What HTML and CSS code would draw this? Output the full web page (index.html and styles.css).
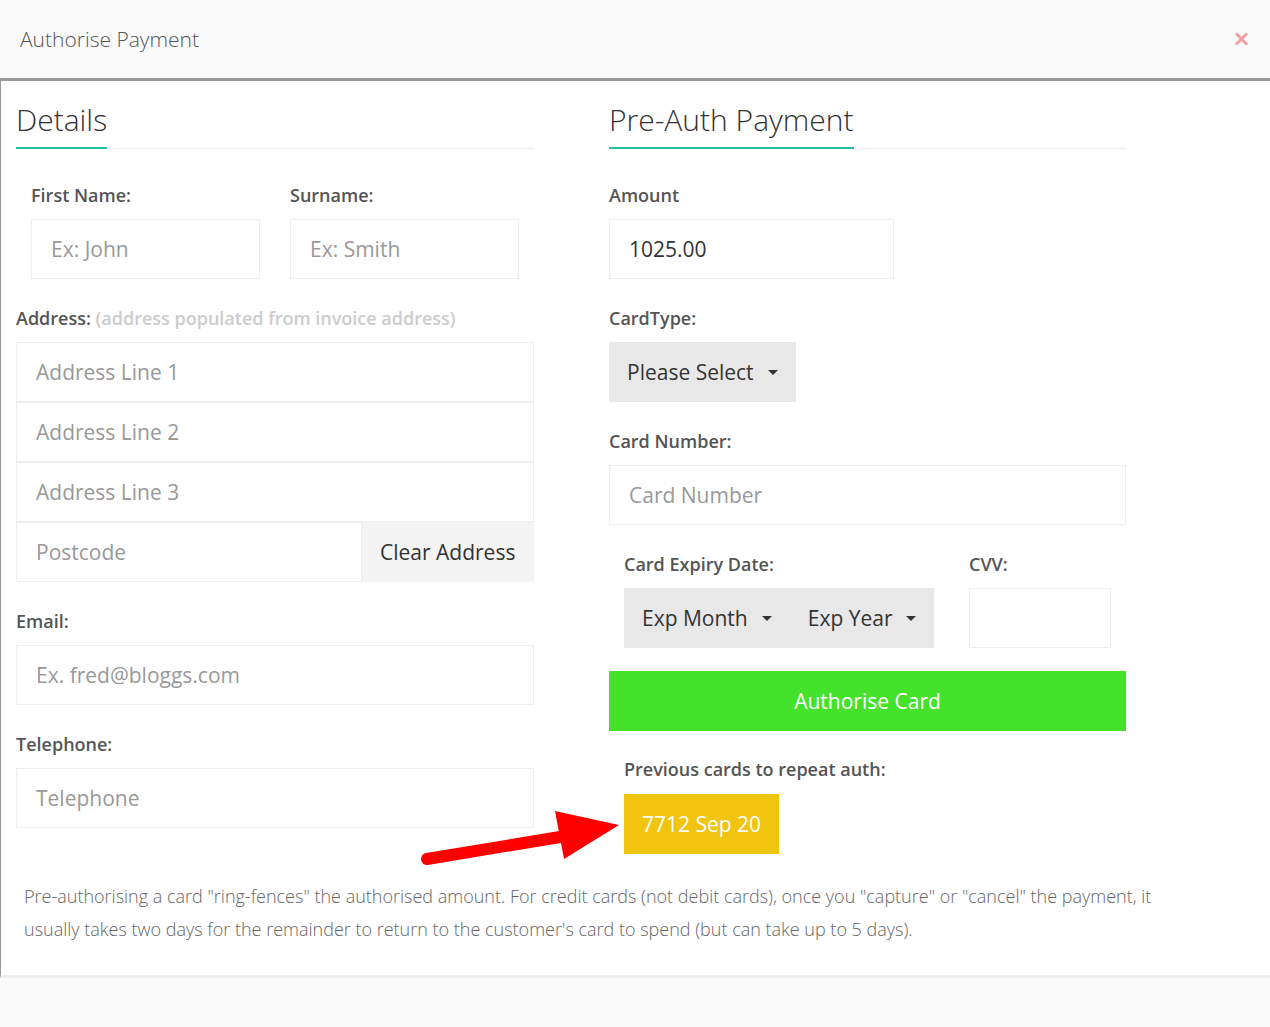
FILE: index.html
```html
<!DOCTYPE html>
<html lang="en">
<head>
  <meta charset="UTF-8">
  <meta name="viewport" content="width=device-width, initial-scale=1.0">
  <title>Authorise Payment</title>
  <link rel="stylesheet" href="styles.css">
</head>
<body>

  <div class="modal">
    <!-- Header -->
    <div class="modal-header">
      <h4 class="modal-title">Authorise Payment</h4>
      <button class="close" type="button" aria-label="Close">
        <svg width="15" height="14" viewBox="0 0 15 14">
          <path d="M2 1.5 L13 12.5 M13 1.5 L2 12.5" stroke="#f2a0a3" stroke-width="3" fill="none"/>
        </svg>
      </button>
    </div>

    <div class="modal-body">
      <div class="columns">

        <!-- Details -->
        <div class="col">
          <h2 class="section-title"><span>Details</span></h2>

          <div class="pair">
            <div class="form-group">
              <label>First Name:</label>
              <input type="text" class="form-control" placeholder="Ex: John">
            </div>
            <div class="form-group">
              <label>Surname:</label>
              <input type="text" class="form-control" placeholder="Ex: Smith">
            </div>
          </div>

          <div class="form-group">
            <label>Address: <span class="hint">(address populated from invoice address)</span></label>
            <input type="text" class="form-control" placeholder="Address Line 1">
            <input type="text" class="form-control" placeholder="Address Line 2">
            <input type="text" class="form-control" placeholder="Address Line 3">
            <div class="input-group">
              <input type="text" class="form-control" placeholder="Postcode">
              <button type="button" class="btn-clear">Clear Address</button>
            </div>
          </div>

          <div class="form-group">
            <label>Email:</label>
            <input type="text" class="form-control" placeholder="Ex. fred@bloggs.com">
          </div>

          <div class="form-group last">
            <label>Telephone:</label>
            <input type="text" class="form-control" placeholder="Telephone">
          </div>
        </div>

        <!-- Pre-Auth -->
        <div class="col">
          <h2 class="section-title"><span>Pre-Auth Payment</span></h2>

          <div class="form-group">
            <label>Amount</label>
            <input type="text" class="form-control amount" value="1025.00">
          </div>

          <div class="form-group">
            <label>CardType:</label>
            <button type="button" class="btn-select">Please Select <span class="caret"></span></button>
          </div>

          <div class="form-group">
            <label>Card Number:</label>
            <input type="text" class="form-control" placeholder="Card Number">
          </div>

          <div class="expiry-row">
            <div class="expiry">
              <label>Card Expiry Date:</label>
              <div class="btn-group">
                <button type="button" class="btn-select">Exp Month <span class="caret"></span></button>
                <button type="button" class="btn-select">Exp Year <span class="caret"></span></button>
              </div>
            </div>
            <div class="cvv">
              <label>CVV:</label>
              <input type="text" class="form-control">
            </div>
          </div>

          <button type="button" class="btn-authorise">Authorise Card</button>

          <div class="previous">
            <label>Previous cards to repeat auth:</label>
            <button type="button" class="btn-card">7712 Sep 20</button>
          </div>
        </div>
      </div>

      <p class="note">Pre-authorising a card "ring-fences" the authorised amount. For credit cards (not debit cards), once you "capture" or "cancel" the payment, it usually takes two days for the remainder to return to the customer's card to spend (but can take up to 5 days).</p>
    </div>

    <div class="modal-footer"></div>

    <!-- pointer to the saved card -->
    <svg class="arrow" width="1270" height="1027" viewBox="0 0 1270 1027">
      <line x1="427" y1="859" x2="566" y2="836" stroke="#ff0000" stroke-width="12" stroke-linecap="round"/>
      <polygon points="555,811 619,825 564,859" fill="#ff0000"/>
    </svg>
  </div>

</body>
</html>
```

FILE: styles.css
```css
/* Base */
body {
  margin: 0;
  font-family: 'Open Sans', 'Liberation Sans', sans-serif;
  color: #555;
  background: #fafafa;
}

.modal {
  position: relative;
  width: 1270px;
}

/* Header */
.modal-header {
  height: 78px;
  background: #fafafa;
  border-bottom: 3px solid #999;
  display: flex;
  align-items: center;
  justify-content: space-between;
  padding: 0 21px 0 20px;
  box-sizing: content-box;
}

.modal-title {
  margin: 0;
  font-size: 21px;
  font-weight: 300;
  line-height: 28px;
  color: #555;
}

.close {
  border: none;
  background: none;
  padding: 0;
  display: flex;
  cursor: pointer;
}

/* Body */
.modal-body {
  background: #fff;
  border-left: 1px solid #999;
  border-bottom: 3px solid #ededed;
  padding: 19px 0 29px 15px;
}

.columns {
  display: grid;
  grid-template-columns: 518px 517px;
  column-gap: 75px;
  align-items: start;
}

.section-title {
  margin: 0 0 34px;
  font-size: 30px;
  font-weight: 300;
  line-height: 40px;
  color: #333;
  border-bottom: 1px solid #eee;
}

.section-title span {
  display: inline-block;
  padding-bottom: 7px;
  border-bottom: 2px solid #1fc19e;
  margin-bottom: -1px;
}

label {
  display: block;
  font-size: 18px;
  font-weight: 600;
  line-height: 24px;
  color: #555;
  margin-bottom: 12px;
}

.hint {
  color: #ccc;
}

.form-group {
  margin-bottom: 27px;
}

.form-group.last {
  margin-bottom: 0;
}

.pair {
  display: grid;
  grid-template-columns: 1fr 1fr;
  column-gap: 30px;
  padding: 0 15px;
}

.form-control {
  display: block;
  width: 100%;
  height: 60px;
  box-sizing: border-box;
  border: 1px solid #eee;
  padding: 0 19px;
  font-family: inherit;
  font-size: 21px;
  color: #333;
  background: #fff;
  outline: none;
}

.form-control::placeholder {
  color: #999;
}

.input-group {
  display: flex;
}

.input-group .form-control {
  width: 346px;
}

.btn-clear {
  flex: 1;
  height: 60px;
  border: none;
  background: #f4f4f4;
  font-family: inherit;
  font-size: 21px;
  color: #333;
  padding: 0 18px;
  text-align: left;
}

.amount {
  width: 285px;
}

/* Dropdown buttons */
.btn-select {
  height: 60px;
  border: none;
  background: #e8e8e8;
  font-family: inherit;
  font-size: 21px;
  color: #333;
  padding: 0 18px;
  display: inline-flex;
  align-items: center;
  cursor: pointer;
}

.caret {
  display: inline-block;
  margin-left: 14px;
  border-left: 5px solid transparent;
  border-right: 5px solid transparent;
  border-top: 5px solid #333;
}

.btn-group {
  display: flex;
}

.expiry-row {
  display: grid;
  grid-template-columns: 345px 172px;
  margin-bottom: 23px;
}

.expiry,
.cvv {
  padding: 0 15px;
}

.btn-authorise {
  display: block;
  width: 100%;
  height: 60px;
  border: none;
  background: #44e22a;
  color: #fff;
  font-family: inherit;
  font-size: 21px;
  cursor: pointer;
}

.previous {
  margin-top: 26px;
  padding: 0 15px;
}

.previous label {
  margin-bottom: 13px;
}

.btn-card {
  height: 60px;
  border: none;
  background: #f1c40f;
  color: #fff;
  font-family: inherit;
  font-size: 21px;
  padding: 0 18px;
  cursor: pointer;
}

.note {
  width: 1150px;
  margin: 26px 0 0 8px;
  font-size: 18px;
  font-weight: 300;
  line-height: 33px;
  color: #666;
}

/* Footer */
.modal-footer {
  height: 40px;
  margin-top: 9px;
  background: #fafafa;
}

.arrow {
  position: absolute;
  left: 0;
  top: 0;
  pointer-events: none;
}
```
